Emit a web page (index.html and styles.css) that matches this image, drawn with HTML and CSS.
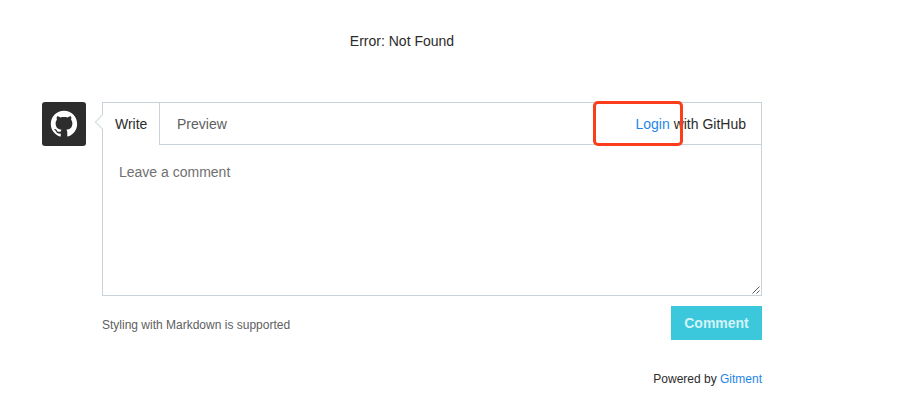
FILE: index.html
```html
<!DOCTYPE html>
<html lang="en">
<head>
<meta charset="utf-8">
<title>Gitment</title>
<link rel="stylesheet" href="styles.css">
</head>
<body>
<main class="container">
  <div class="error">Error: Not Found</div>
  <section class="editor">
    <a class="avatar">
      <svg viewBox="0 0 50 50" width="44" height="44"><path fill="#fff" d="M25 10c-8.3 0-15 6.7-15 15 0 6.6 4.3 12.2 10.3 14.2.8.1 1-.3 1-.7v-2.6c-4.2.9-5.1-2-5.1-2-.7-1.7-1.7-2.2-1.7-2.2-1.4-.9.1-.9.1-.9 1.5.1 2.3 1.5 2.3 1.5 1.3 2.3 3.5 1.6 4.4 1.2.1-1 .5-1.6 1-2-3.3-.4-6.8-1.7-6.8-7.4 0-1.6.6-3 1.5-4-.2-.4-.7-1.9.1-4 0 0 1.3-.4 4.1 1.5 1.2-.3 2.5-.5 3.8-.5 1.3 0 2.6.2 3.8.5 2.9-1.9 4.1-1.5 4.1-1.5.8 2.1.3 3.6.1 4 1 1 1.5 2.4 1.5 4 0 5.8-3.5 7-6.8 7.4.5.5 1 1.4 1 2.8v4.1c0 .4.3.9 1 .7 6-2 10.2-7.6 10.2-14.2C40 16.7 33.3 10 25 10z"/></svg>
    </a>
    <div class="main">
      <div class="box">
        <svg class="arrow" width="9" height="16" viewBox="0 0 9 16"><path d="M9 .5 1.5 8 9 15.5z" fill="#fff"/><path d="M8.3 1 1.4 8l6.9 7" fill="none" stroke="#dbe3e7" stroke-width="1.5"/></svg>
        <div class="header">
          <div class="tab selected">Write</div>
          <div class="tab preview">Preview</div>
          <div class="login"><a class="link">Login</a> with GitHub</div>
          <div class="highlight"></div>
        </div>
        <div class="body">Leave a comment
          <svg class="grip" width="9" height="9" viewBox="0 0 9 9"><path d="M1.5 8.5l7-7M5.5 8.5l3-3" stroke="#444" stroke-width=".9" fill="none"/></svg>
        </div>
      </div>
      <div class="footer">
        <span class="tip">Styling with Markdown is supported</span>
        <button class="submit">Comment</button>
      </div>
    </div>
  </section>
  <footer class="powered">Powered by <a class="link">Gitment</a></footer>
</main>
</body>
</html>
```
FILE: styles.css
```css
* {
  box-sizing: border-box;
}

body {
  margin: 0;
  background: #fff;
  color: #2b2b2b;
  font: 14px/20px "Liberation Sans", Arial, sans-serif;
}

.container {
  width: 720px;
  margin-left: 42px;
  padding-top: 31px;
}

.error {
  text-align: center;
}

.link {
  color: #1f86e8;
}

.editor {
  display: flex;
  gap: 16px;
  margin-top: 51px;
}

.avatar {
  width: 44px;
  height: 44px;
  border-radius: 3px;
  background: #2d2d2d;
}

.avatar svg {
  display: block;
}

.main {
  flex: 1;
}

.box {
  position: relative;
  height: 194px;
  border: 1px solid #c8d2d8;
}

.arrow {
  position: absolute;
  left: -9px;
  top: 11px;
}

.header {
  position: relative;
  display: flex;
  height: 42px;
  line-height: 42px;
}

.tab {
  color: #606060;
}

.selected {
  width: 57px;
  padding-left: 12px;
  color: #2b2b2b;
  border-right: 1px solid #c8d2d8;
}

.preview,
.login {
  border-bottom: 1px solid #c8d2d8;
}

.preview {
  padding-left: 17px;
}

.login {
  flex: 1;
  padding-right: 15px;
  text-align: right;
}

.highlight {
  position: absolute;
  left: 490px;
  top: -2px;
  width: 90px;
  height: 45px;
  border: 3px solid #fb3d1c;
  border-radius: 5px;
}

.body {
  padding: 17px 16px;
  color: #707070;
}

.grip {
  position: absolute;
  right: 1px;
  bottom: 1px;
}

.footer {
  display: flex;
  justify-content: space-between;
  margin-top: 10px;
}

.tip {
  padding-top: 9px;
  font-size: 12px;
  color: #606060;
}

.submit {
  width: 91px;
  height: 34px;
  padding: 0;
  border: 0;
  background: #3bc8dc;
  color: #d3f3f7;
  font: bold 14px "Liberation Sans", Arial, sans-serif;
}

.powered {
  margin-top: 29px;
  font-size: 12px;
  text-align: right;
}
```
